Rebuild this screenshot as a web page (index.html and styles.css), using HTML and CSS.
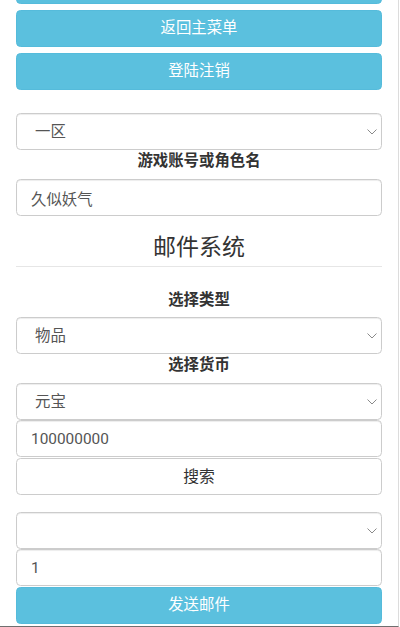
FILE: index.html
```html
<!DOCTYPE html>
<html lang="zh-CN">
<head>
<meta charset="utf-8">
<title>邮件系统</title>
<link rel="stylesheet" href="styles.css">
</head>
<body>
<div class="page">
  <button class="btn btn-info btn-first" aria-label="返回"></button>
  <button class="btn btn-info btn-stack">返回主菜单</button>
  <button class="btn btn-info btn-stack">登陆注销</button>

  <div class="select-wrap sel-server">
    <select class="control select"><option>一区</option></select>
    <svg class="chev" viewBox="0 0 10 6" width="10" height="6"><path d="M0.5 0.5 L5 5 L9.5 0.5" fill="none" stroke="#8a8a8a" stroke-width="1"/></svg>
  </div>
  <div class="label lbl-account">游戏账号或角色名</div>
  <input class="control input" type="text" value="久似妖气">

  <h3 class="title">邮件系统</h3>
  <hr class="rule">

  <div class="label lbl-type">选择类型</div>
  <div class="select-wrap">
    <select class="control select"><option>物品</option></select>
    <svg class="chev" viewBox="0 0 10 6" width="10" height="6"><path d="M0.5 0.5 L5 5 L9.5 0.5" fill="none" stroke="#8a8a8a" stroke-width="1"/></svg>
  </div>
  <div class="label lbl-currency">选择货币</div>
  <div class="select-wrap">
    <select class="control select"><option>元宝</option></select>
    <svg class="chev" viewBox="0 0 10 6" width="10" height="6"><path d="M0.5 0.5 L5 5 L9.5 0.5" fill="none" stroke="#8a8a8a" stroke-width="1"/></svg>
  </div>
  <input class="control input tight" type="text" value="100000000">
  <button class="btn btn-default tight">搜索</button>

  <div class="select-wrap sel-item">
    <select class="control select"><option></option></select>
    <svg class="chev" viewBox="0 0 10 6" width="10" height="6"><path d="M0.5 0.5 L5 5 L9.5 0.5" fill="none" stroke="#8a8a8a" stroke-width="1"/></svg>
  </div>
  <input class="control input" type="text" value="1">
  <button class="btn btn-info tight">发送邮件</button>
</div>
<div class="frame"></div>
</body>
</html>
```

FILE: styles.css
```css
* { box-sizing: border-box; }
html, body { margin: 0; padding: 0; background: #fff; }
body {
  font-family: Roboto, "Noto Sans CJK SC", "Noto Sans", sans-serif;
  font-size: 15.4px;
  color: #333;
  overflow: hidden;
}
.page {
  display: flex;
  flex-direction: column;
  padding: 0 18px 0 16px;
}
.btn {
  display: block;
  width: 100%;
  height: 37px;
  margin: 0;
  padding: 0 12px;
  font-family: inherit;
  font-size: 15.4px;
  line-height: 35px;
  text-align: center;
  border-radius: 4.5px;
  border: 1px solid transparent;
  cursor: pointer;
}
.btn-info {
  background: #5bc0de;
  border-color: #55bbdb;
  color: #fff;
}
.btn-default {
  background: #fff;
  border-color: #ccc;
  color: #333;
  font-size: 15.8px;
}
.btn-first { margin-top: -33px; }
.btn-stack { margin-top: 6px; }
.tight { margin-top: 1px; }

.control {
  display: block;
  width: 100%;
  height: 37px;
  margin: 0;
  font-family: inherit;
  font-size: 15.4px;
  color: #555;
  background: #fff;
  border: 1px solid #ccc;
  border-radius: 4.5px;
  box-shadow: inset 0 1px 1px rgba(0,0,0,.075);
  outline: none;
}
.input { padding: 0 14px; }
.select {
  appearance: none;
  -webkit-appearance: none;
  padding: 0 30px 0 18px;
}
.select-wrap { position: relative; }
.chev {
  position: absolute;
  right: 5px;
  top: 16px;
  pointer-events: none;
}
.sel-server { margin-top: 23px; }
.sel-item { margin-top: 17px; }

.label {
  font-weight: 700;
  text-align: center;
  line-height: 22px;
  color: #333;
}
.lbl-account { margin-bottom: 7px; }
.lbl-type { margin-top: 22px; margin-bottom: 6px; }
.lbl-currency { margin-bottom: 7px; }

.title {
  margin: 17px 0 0;
  font-size: 23px;
  font-weight: 400;
  line-height: 30px;
  text-align: center;
  color: #333;
}
.rule {
  margin: 3px 0 0;
  border: 0;
  border-top: 1px solid #e6e6e6;
  height: 0;
}
.frame {
  position: fixed;
  left: 0;
  top: 0;
  width: 399px;
  height: 627px;
  border-right: 1px solid #dcdcdc;
  border-bottom: 1px solid #6f6f6f;
  pointer-events: none;
}
```
